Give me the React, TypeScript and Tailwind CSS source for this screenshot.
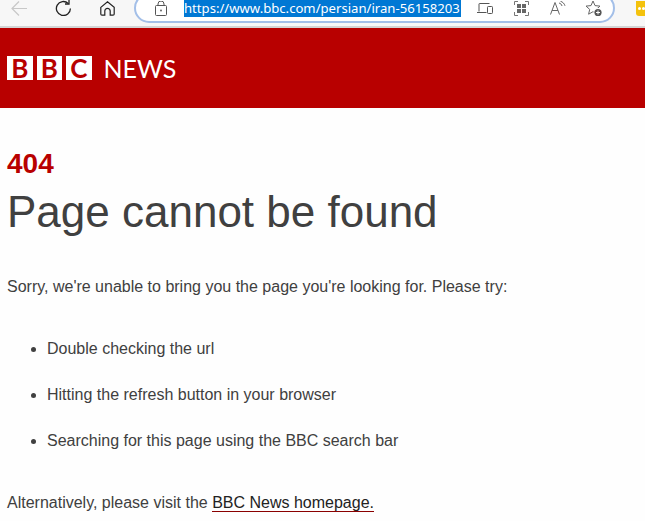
import React from 'react';

const BbcBlock = ({ letter }: { letter: string }) => (
  <span className="flex h-6 w-[25.5px] items-center justify-center bg-white font-['Lato',sans-serif] text-[26px] font-bold leading-none text-[#b80000]">
    {letter}
  </span>
);

const BackIcon = () => (
  <svg width="16" height="15" viewBox="0 0 16 15" fill="none" stroke="#c8c8c8" strokeWidth="1.2">
    <path d="M16 7.5H1M8 .5l-7 7 7 7" />
  </svg>
);

const RefreshIcon = () => (
  <svg width="17" height="16" viewBox="0 0 17 16" fill="none" stroke="#222" strokeWidth="1.3">
    <path d="M13.2 3.4A7 7 0 1 0 15.4 8.4" />
    <path d="M14 0v4h-4" />
  </svg>
);

const HomeIcon = () => (
  <svg width="15" height="15" viewBox="0 0 15 15" fill="none" stroke="#222" strokeWidth="1.2">
    <path d="M.8 6.4 7.5.8l6.7 5.6V13a1.2 1.2 0 0 1-1.2 1.2h-2.8V10a2.7 2.7 0 0 0-5.4 0v4.2H2A1.2 1.2 0 0 1 .8 13z" />
  </svg>
);

const LockIcon = () => (
  <svg width="12" height="15" viewBox="0 0 12 15" fill="none" stroke="#555" strokeWidth="1">
    <rect x="0.5" y="4.5" width="11" height="10" rx="1" />
    <path d="M3 4.5V3a3 3 0 0 1 6 0v1.5" />
    <circle cx="6" cy="9.5" r="0.9" fill="#555" stroke="none" />
  </svg>
);

const DevicesIcon = () => (
  <svg width="16" height="11" viewBox="0 0 16 11" fill="none" stroke="#555" strokeWidth="1">
    <path d="M2 8.5V1a.5.5 0 0 1 .5-.5h10M0 9.5h9.5" />
    <rect x="10.5" y="3.5" width="5" height="7" rx="0.8" />
  </svg>
);

const AppsIcon = () => (
  <svg width="15" height="15" viewBox="0 0 15 15" fill="none" stroke="#777" strokeWidth="1">
    <path d="M.5 4V.5H4M11 .5h3.5V4M14.5 11v3.5H11M4 14.5H.5V11" />
    <g fill="#666" stroke="none">
      <rect x="3" y="3" width="4" height="4" />
      <rect x="8" y="3" width="4" height="4" />
      <rect x="3" y="8" width="4" height="4" />
      <rect x="8" y="8" width="4" height="4" />
    </g>
  </svg>
);

const ReadAloudIcon = () => (
  <svg width="16" height="14" viewBox="0 0 16 14" fill="none" stroke="#666" strokeWidth="1">
    <path d="M.5 13.5 5 1.5l4.5 12M2 9.5h6" />
    <path d="M9 2c1.6.4 2.6 1.4 3 3M10.5.3c2.2.6 3.8 2.2 4.5 4.5" />
  </svg>
);

const FavoriteIcon = () => (
  <svg width="18" height="17" viewBox="0 0 18 17" fill="none" stroke="#666" strokeWidth="1">
    <path d="M8 1 10 5.6l5 .5-3.7 3.3 1.1 4.8L8 11.7l-4.4 2.5 1.1-4.8L1 6.1l5-.5z" />
    <circle cx="13" cy="12.5" r="4.5" fill="#fff" stroke="none" />
    <circle cx="13" cy="12.5" r="3.6" fill="#555" stroke="none" />
    <path d="M11 12.5h4M13 10.5v4" stroke="#fff" />
  </svg>
);

const ExtensionBadge = () => (
  <span className="flex h-[15px] w-[9px] items-center gap-px rounded-bl-[3px] bg-[#f4c20d] pl-0.5">
    <span className="h-[3px] w-[3px] rounded-full bg-white" />
    <span className="h-[3px] w-[3px] rounded-full bg-white" />
  </span>
);

export default function App() {
  return (
    <div className="h-[521px] w-[645px] overflow-hidden bg-[#fefefe] font-['Liberation_Sans',Arial,sans-serif]">
      <div className="h-7 overflow-hidden border-b-2 border-[#d4d4d4] bg-[#f7f7f7]">
        <div className="-mt-[7px] flex h-[30px] items-center">
          <div className="ml-[11px] flex w-[123px] shrink-0 items-center">
            <BackIcon />
            <span className="ml-7"><RefreshIcon /></span>
            <span className="ml-[28px]"><HomeIcon /></span>
          </div>
          <div className="flex h-[30px] w-[481px] shrink-0 items-center rounded-full border-2 border-[#a3bfe8] bg-white pl-[19px]">
            <LockIcon />
            <span className="ml-[17px] w-[277px] shrink-0 whitespace-nowrap bg-[#0078d4] font-['Noto_Sans',sans-serif] text-[13.14px] leading-[17px] text-white">
              https://www.bbc.com/persian/iran-56158203
            </span>
            <span className="ml-4"><DevicesIcon /></span>
            <span className="ml-[21px]"><AppsIcon /></span>
            <span className="ml-[21px]"><ReadAloudIcon /></span>
            <span className="ml-[19px]"><FavoriteIcon /></span>
          </div>
          <span className="ml-[21px]"><ExtensionBadge /></span>
        </div>
      </div>

      <header className="flex h-20 items-center gap-3 bg-[#b80000] pl-[7px]">
        <div className="flex gap-1">
          <BbcBlock letter="B" />
          <BbcBlock letter="B" />
          <BbcBlock letter="C" />
        </div>
        <span className="font-['Lato',sans-serif] text-[25px] leading-none text-white">NEWS</span>
      </header>

      <main className="px-[7px] pt-[41px] text-[#404040]">
        <p className="text-[28px] font-bold leading-[30px] text-[#b80000]">404</p>
        <h1 className="mt-[6px] text-[44px] leading-[54px]">Page cannot be found</h1>
        <p className="mt-[36px] text-base leading-[24px]">
          Sorry, we're unable to bring you the page you're looking for. Please try:
        </p>
        <ul className="mt-[38px] list-disc space-y-[22px] pl-10 text-base leading-[24px]">
          <li>Double checking the url</li>
          <li>Hitting the refresh button in your browser</li>
          <li>Searching for this page using the BBC search bar</li>
        </ul>
        <p className="mt-[38px] text-base leading-[24px]">
          Alternatively, please visit the{' '}
          <a href="#" className="border-b border-[#8a0000] text-[#222]">BBC News homepage.</a>
        </p>
      </main>
    </div>
  );
}
